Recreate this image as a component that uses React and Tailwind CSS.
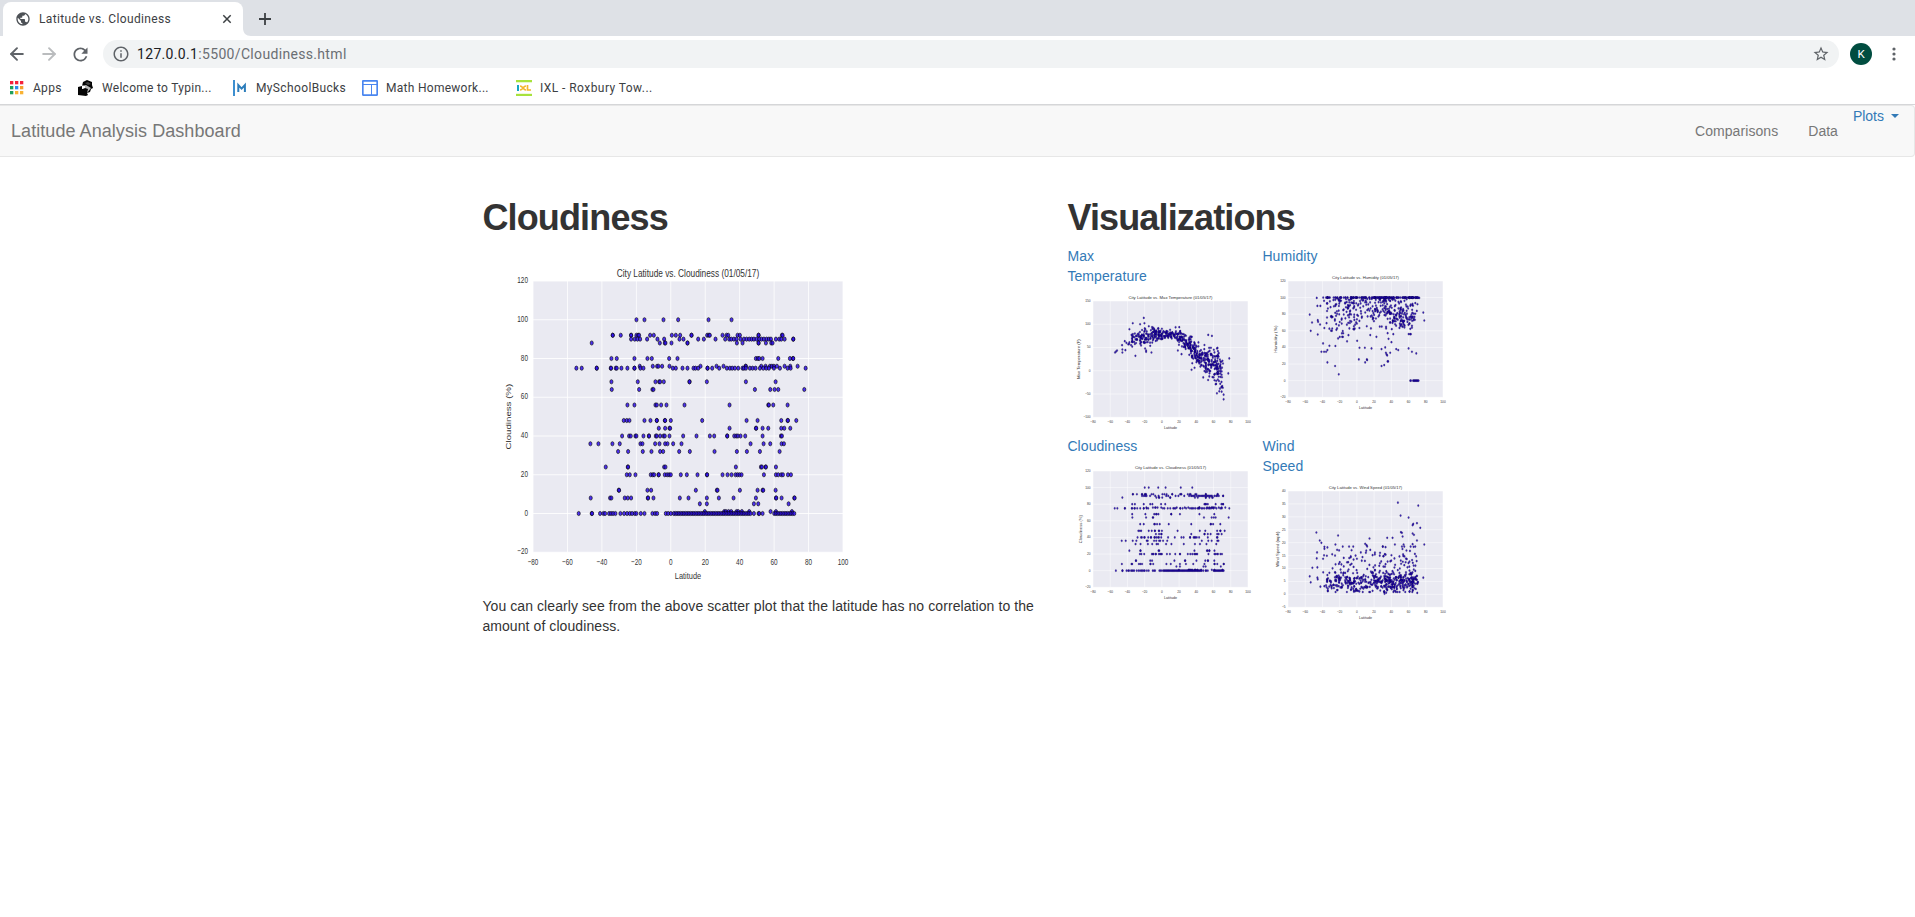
import React from "react";
import { ArrowLeft, ArrowRight } from "lucide-react";
import { MdRefresh, MdStarBorder, MdInfoOutline, MdPublic } from "react-icons/md";

/* Cloudiness readings: value -> positions along the latitude axis, 190..1119 spanning -80..100 */
const span = (a, b, step) => {
  const out = [];
  for (let x = a; x <= b; x += step) out.push(x);
  return out;
};
const CLOUD_ROWS = [
  [100, [500, 524, 581, 625, 716, 785]],
  [92, [429, 429, 453, 484, 484, 500, 505, 508, 541, 552, 606, 618, 631, 665, 665, 712, 717, 720, 758, 770, 775, 803, 810, 866, 866, 936, 938]],
  [90, [484, 495, 503, 511, 532, 563, 583, 629, 641, 685, 702, 737, 766, 778, 784, 792, 800, 812, 822, 830, 838, 845, 852, 860, 868, 875, 882, 890, 897, 903, 918, 928, 934, 944, 970, 970]],
  [88, [366, 570, 585, 587, 605, 653, 653, 801, 818, 866, 866, 888, 904, 908]],
  [80, [425, 441, 494, 533, 546, 598, 623, 858, 864, 868, 878, 925, 960, 969, 970]],
  [76, [510, 549, 562, 566, 577, 599, 692, 740, 761, 827, 828, 874, 887, 900, 906, 912, 921, 944, 961, 983]],
  [75, [320, 336, 381, 381, 423, 424, 438, 441, 455, 473, 494, 494, 512, 521, 609, 618, 638, 653, 671, 677, 685, 713, 713, 727, 748, 771, 780, 787, 795, 805, 818, 822, 828, 840, 848, 857, 870, 880, 889, 897, 912, 930, 953, 962, 1007]],
  [68, [425, 504, 557, 568, 571, 582, 659, 659, 711, 828, 917]],
  [64, [426, 508, 548, 551, 855, 901, 914, 925, 1003]],
  [56, [473, 494, 557, 561, 574, 590, 644, 779, 895, 897, 910, 953]],
  [48, [462, 471, 479, 524, 542, 561, 561, 585, 586, 603, 697, 830, 863, 934, 953, 954, 979]],
  [44, [567, 586, 599, 601, 779, 858, 859, 878, 895, 934, 943, 961]],
  [40, [457, 478, 483, 497, 500, 521, 537, 538, 558, 561, 571, 581, 585, 599, 640, 680, 720, 733, 772, 772, 793, 799, 804, 812, 826, 878, 933, 936]],
  [36, [362, 386, 428, 450, 512, 518, 556, 569, 586, 593, 610, 635, 842, 881, 901, 935, 942]],
  [32, [445, 475, 519, 545, 571, 580, 628, 660, 734, 801, 831, 870, 929]],
  [24, [408, 474, 475, 583, 587, 798, 873, 876, 887, 888, 918]],
  [20, [471, 480, 497, 543, 549, 553, 566, 567, 585, 592, 598, 603, 633, 651, 683, 711, 712, 758, 773, 785, 797, 803, 809, 815, 882, 918, 925, 934, 939, 954, 963]],
  [12, [447, 448, 533, 544, 678, 741, 743, 810, 863, 878, 880, 917]],
  [8, [363, 421, 425, 465, 474, 484, 534, 535, 551, 630, 656, 711, 747, 791, 858, 918, 919, 935, 973, 974]],
  [5, [690, 711, 852, 865, 956]],
  [1, [705, 763, 768, 776, 784, 800, 805, 816, 838, 902, 918, 966]],
  [0, [327, 366, 367, 391, 401, 406, 418, 424, 430, 437, 452, 463, 472, 480, 487, 495, 500, 513, 524, 548, 556, 562, 588, 595, 603, ...span(612, 846, 5), 852, 866, 868, 878, ...span(913, 974, 5)]],
];
const toLat = (x) => ((x - 190) / 929) * 180 - 80;
const cloudiness = CLOUD_ROWS.flatMap(([v, xs]) => xs.map((x) => [toLat(x), v]));

const makeRandom = (seed) => () => {
  seed = (seed * 1664525 + 1013904223) % 4294967296;
  return seed / 4294967296;
};
const rnd = makeRandom(20170105);
const gauss = () => (rnd() + rnd() + rnd() + rnd() - 2) * 1.73;
const lats = [
  ...cloudiness.map(([l]) => l).filter((l) => l > -40 && l < 71),
  ...span(0, 90, 1).map(() => 18 + rnd() * 50),
];

const CURVE = [[-60, 36, 4], [-45, 55, 6], [-33, 68, 8], [-20, 75, 9], [0, 79, 7], [18, 77, 7], [26, 66, 9], [36, 44, 13], [46, 28, 14], [54, 18, 17], [60, 9, 18], [66, 4, 22], [72, -4, 27]];
const curveAt = (lat) => {
  let i = 0;
  while (i < CURVE.length - 2 && lat > CURVE[i + 1][0]) i++;
  const [a, b] = [CURVE[i], CURVE[i + 1]];
  const t = (lat - a[0]) / (b[0] - a[0]);
  return [a[1] + (b[1] - a[1]) * t, a[2] + (b[2] - a[2]) * t];
};
/* positions measured on a 464x350 axes grid whose left edge is at x = 100 */
const fromGrid = (pts, top, max, range) =>
  pts.map(([x, y]) => [((x - 100) / 464) * 180 - 80, max - ((y - top) / 350) * range]);

const temperature = [
  ...lats.map((l) => {
    const [m, s] = curveAt(l);
    return [l, m + gauss() * s * 0.95];
  }),
  ...fromGrid([[252, 113], [219, 129], [241, 132], [254, 129], [209, 147], [267, 138], [445, 164], [456, 167], [453, 203], [508, 235], [505, 280], [491, 358], [491, 344], [227, 227], [166, 217], [169, 214], [172, 211], [187, 195], [188, 208], [188, 217], [197, 210], [195, 183], [200, 188], [256, 205], [259, 211], [259, 215], [275, 217], [354, 211], [365, 222], [395, 269], [404, 263], [430, 292], [474, 213], [471, 340], [485, 335], [487, 318], [480, 326], [478, 334], [484, 322]], 62, 150, 250),
];

const humidity = [
  ...lats.filter((l) => l < 64 || rnd() < 0.75).map((l) => {
    const r = rnd();
    if (r < 0.3) return [l, 100];
    if (l > 42) return [l, Math.max(56, Math.min(98, 78 + gauss() * 11))];
    if (l < -28) return [l, Math.max(60, Math.min(98, 80 + gauss() * 10))];
    return [l, Math.max(38, 99 - Math.abs(gauss()) * 21)];
  }),
  ...span(62, 72, 0.8).filter((l) => l < 63.5 || l > 65).map((l) => [l, 0]),
  ...fromGrid([[165, 163], [172, 187], [168, 212], [186, 113], [188, 137], [197, 137], [189, 180], [190, 185], [196, 193], [189, 223], [205, 250], [200, 275], [208, 275], [214, 275], [218, 270], [224, 257], [218, 307], [241, 318], [252, 343], [250, 235], [262, 230], [281, 225], [307, 242], [312, 298], [331, 307], [336, 298], [337, 300], [314, 263], [330, 263], [350, 265], [380, 318], [388, 315], [395, 283], [397, 286], [398, 304], [400, 304], [406, 278], [393, 278], [391, 262], [424, 267], [430, 270], [461, 265], [471, 275], [484, 280], [505, 157], [508, 181], [489, 113], [493, 113]], 62, 120, 140),
];

const wind = [
  ...lats.map((l) => {
    const low = rnd() < 0.64;
    return [l, low ? Math.max(0.9, 4.2 + gauss() * 1.8) : Math.min(18.5, 4.8 + Math.abs(gauss()) * 6.6)];
  }),
  ...fromGrid([[429, 217], [490, 226], [437, 256], [461, 262], [486, 279], [475, 281], [473, 285], [496, 293], [438, 306], [441, 308], [473, 310], [477, 314], [443, 319], [486, 331], [508, 343], [185, 307], [195, 331], [200, 338], [250, 316], [344, 325], [397, 323], [413, 323], [209, 350], [209, 356], [242, 343], [247, 359], [253, 361], [187, 367], [186, 385], [173, 413], [165, 439], [168, 457], [188, 412], [188, 443], [189, 448], [197, 470], [331, 341], [335, 345], [337, 349], [392, 351], [420, 343], [446, 343], [473, 342], [476, 350], [505, 443], [389, 491], [394, 488], [451, 486], [487, 489], [205, 386], [218, 352], [318, 367], [333, 368], [323, 381], [360, 373]], 182, 40, 45),
];

const LATITUDES = [-80, -60, -40, -20, 0, 20, 40, 60, 80, 100];
const tickText = (v) => String(v).replace("-", "−");
const tickWidth = (v) => tickText(v).length * 5.7;

function ScatterPlot({ title, titleWidth, label, labelWidth, labelX = 40, min, max, step, points, small = false, className }) {
  const px = (v) => 80 + ((v + 80) / 180) * 496;
  const py = (v) => 420 - ((v - min) / (max - min)) * 372;
  const ticks = span(min, max, step);
  return (
    <svg viewBox="0 0 640 480" preserveAspectRatio="none" className={className} fontFamily="'Liberation Sans', Arial, sans-serif" fill="#333333">
      <rect x="80" y="48" width="496" height="372" fill="#eaeaf2" />
      <g stroke="#ffffff" strokeWidth={small ? 1.8 : 1.4} strokeOpacity="0.85">
        {LATITUDES.map((v) => <line key={v} x1={px(v)} x2={px(v)} y1="48" y2="420" />)}
        {ticks.map((v) => <line key={v} x1="80" x2="576" y1={py(v)} y2={py(v)} />)}
      </g>
      <g fill={small ? "#1c00b4" : "#2f0ff0"} fillOpacity="0.85" stroke="#000000" strokeWidth={small ? 0.8 : 1.1} strokeOpacity={small ? 0.6 : 0.8}>
        {points.map(([lat, v], i) => <ellipse key={i} cx={px(lat)} cy={py(v)} rx={small ? 2.8 : 2.5} ry={small ? 3.5 : 2.9} />)}
      </g>
      <text x="328" y="42" fontSize="14" textAnchor="middle" textLength={titleWidth} lengthAdjust="spacingAndGlyphs">{title}</text>
      <text x="328" y="457" fontSize="13.5" textAnchor="middle" textLength="42" lengthAdjust="spacingAndGlyphs">Latitude</text>
      <text transform={`translate(${labelX + 4} 234) rotate(-90)`} fontSize="12" textAnchor="middle" textLength={labelWidth} lengthAdjust="spacingAndGlyphs">{label}</text>
      <g fontSize="12.5">
        {LATITUDES.map((v) => <text key={v} x={px(v)} y="438" textAnchor="middle" textLength={tickWidth(v)} lengthAdjust="spacingAndGlyphs">{tickText(v)}</text>)}
        {ticks.map((v) => <text key={v} x="72" y={py(v) + 3} textAnchor="end" textLength={tickWidth(v)} lengthAdjust="spacingAndGlyphs">{tickText(v)}</text>)}
      </g>
    </svg>
  );
}

const CLOUD = { title: "City Latitude vs. Cloudiness (01/05/17)", titleWidth: 228, label: "Cloudiness (%)", labelWidth: 90, min: -20, max: 120, step: 20, points: cloudiness };
const THUMBS = [
  { name: ["Max", "Temperature"], plot: { title: "City Latitude vs. Max Temperature (01/05/17)", titleWidth: 269, label: "Max Temperature (F)", labelWidth: 127, labelX: 34, min: -100, max: 150, step: 50, points: temperature } },
  { name: ["Humidity"], plot: { title: "City Latitude vs. Humidity (01/05/17)", titleWidth: 214, label: "Humidity (%)", labelWidth: 87, min: -20, max: 120, step: 20, points: humidity } },
  { name: ["Cloudiness"], plot: CLOUD },
  { name: ["Wind", "Speed"], plot: { title: "City Latitude vs. Wind Speed (01/05/17)", titleWidth: 235, label: "Wind Speed (mph)", labelWidth: 112, labelX: 47, min: -5, max: 40, step: 5, points: wind } },
];

function AppsIcon() {
  const colors = ["#f5223c", "#f5223c", "#f5223c", "#1fa05a", "#2f8af0", "#f5a02c", "#1fa05a", "#f9b233", "#f9b233"];
  return (
    <svg width="14" height="14" viewBox="0 0 14 14" className="shrink-0">
      {colors.map((c, i) => <rect key={i} x={(i % 3) * 5} y={Math.floor(i / 3) * 5} width="3.3" height="3.3" fill={c} />)}
    </svg>
  );
}

function TypingIcon() {
  return (
    <svg width="17" height="17" viewBox="0 0 17 17" className="shrink-0">
      <path d="M1 7l4-1 1-4 4-2 5 2v3l1 3-2 1-1 3-3 1 1 2-2 1-8-1z" fill="#050505" />
      <path d="M5 6l4-1 5 3-4 5 1-4-3-1-3 1z" fill="#b9b9b9" />
      <path d="M5 5.5l3 .5v2L5 9z" fill="#ffffff" />
      <path d="M8 3l3-1 3 2-3 1z" fill="#444444" />
    </svg>
  );
}

function BucksIcon() {
  return (
    <svg width="13" height="16" viewBox="0 0 13 16" className="shrink-0">
      <rect x="0" y="0" width="2" height="16" fill="#3d8fd0" />
      <path d="M5.3 12V5l3.3 3.6L11.9 5v7" fill="none" stroke="#2c7dbb" strokeWidth="2" />
    </svg>
  );
}

function HomeworkIcon() {
  return (
    <svg width="16" height="16" viewBox="0 0 16 16" className="shrink-0">
      <rect x="0.8" y="0.8" width="14.4" height="14.4" rx="0.6" fill="#fff" stroke="#4a86f0" strokeWidth="1.7" />
      <path d="M1 4.5h14M9.5 4.5V15" stroke="#4a86f0" strokeWidth="1" />
    </svg>
  );
}

function IxlIcon() {
  return (
    <svg width="16" height="16" viewBox="0 0 16 16" className="shrink-0">
      <rect width="16" height="2" fill="#a8e23c" />
      <rect y="2" width="16" height="1" fill="#e6f7cc" />
      <rect y="14" width="16" height="2" fill="#a8e23c" />
      <rect y="13" width="16" height="1" fill="#eefadc" />
      <rect x="1" y="5" width="2" height="6" fill="#12a5c4" />
      <path d="M4 6c3 0 3 4 6 4M4 10c3 0 3-4 6-4M11.5 5v5h3.5" fill="none" stroke="#f4b62c" strokeWidth="1.7" />
    </svg>
  );
}

function Bookmark({ icon, children, className }) {
  return (
    <a className={`flex items-center whitespace-nowrap ${className}`}>
      {icon}
      {children}
    </a>
  );
}

function BrowserChrome() {
  return (
    <header className="font-['Roboto',sans-serif] text-[#3c4043]">
      <div className="flex h-9 items-end bg-[#dee1e6]">
        <div className="ml-[3px] flex h-[34px] w-60 items-center rounded-t-lg bg-white pl-[12px] pr-[11px] pb-px text-xs tracking-[0.36px]">
          <MdPublic className="mr-[8px] size-4 text-[#4d5156]" />
          <span className="grow">Latitude vs. Cloudiness</span>
          <svg width="10" height="10" viewBox="0 0 10 10"><path d="M1.3 1.3l7.4 7.4M8.7 1.3L1.3 8.7" stroke="#3c4043" strokeWidth="1.5" /></svg>
        </div>
        <svg width="8" height="8" viewBox="0 0 8 8"><path d="M0 0C0 5 3 8 8 8H0z" fill="#fff" /></svg>
        <svg width="12" height="12" viewBox="0 0 12 12" className="mb-[11px] ml-2"><path d="M6 0v12M0 6h12" stroke="#3c4043" strokeWidth="1.8" /></svg>
      </div>
      <div className="flex h-9 items-center bg-white">
        <ArrowLeft className="ml-[7px] size-5 text-[#5f6368]" strokeWidth={2.3} />
        <ArrowRight className="ml-3 size-5 text-[#babcbe]" strokeWidth={2.3} />
        <MdRefresh className="ml-[11px] size-[21px] text-[#5f6368]" />
        <div className="ml-[12px] flex h-7 w-[1736px] items-center rounded-full bg-[#f1f3f4] pl-[9px] pr-[9px] text-sm tracking-[0.33px]">
          <MdInfoOutline className="mr-[7px] size-[18px] text-[#5f6368]" />
          <span className="grow text-[#6a6e73]"><span className="text-[#202124]">127.0.0.1</span>:5500/Cloudiness.html</span>
          <MdStarBorder className="size-[18px] text-[#5f6368]" />
        </div>
        <div className="ml-[11px] flex size-[22px] items-center justify-center rounded-full bg-[#004d40] text-[11.5px] text-white">K</div>
        <svg width="4" height="14" viewBox="0 0 4 14" className="ml-5" fill="#5f6368"><circle cx="2" cy="2" r="1.6" /><circle cx="2" cy="7" r="1.6" /><circle cx="2" cy="12" r="1.6" /></svg>
      </div>
      <nav className="flex h-[33px] items-center border-b border-[#d5d6d8] bg-white pl-2.5 text-xs tracking-[0.28px]">
        <Bookmark className="w-[67px] gap-[9px]" icon={<AppsIcon />}>Apps</Bookmark>
        <Bookmark className="w-[156px] gap-2" icon={<TypingIcon />}>Welcome to Typin...</Bookmark>
        <Bookmark className="w-[129px] gap-[10px] tracking-[0.36px]" icon={<BucksIcon />}>MySchoolBucks</Bookmark>
        <Bookmark className="w-[154px] gap-2" icon={<HomeworkIcon />}>Math Homework...</Bookmark>
        <Bookmark className="gap-2 tracking-[0.44px]" icon={<IxlIcon />}>IXL - Roxbury Tow...</Bookmark>
      </nav>
    </header>
  );
}

export default function App() {
  return (
    <div className="h-[917px] overflow-hidden bg-white font-['Liberation_Sans',Arial,sans-serif] text-sm leading-5 text-[#333]">
      <BrowserChrome />
      <nav className="flex h-[52px] items-start rounded-r border border-l-0 border-[#e7e7e7] bg-[#f8f8f8] pl-[11px] pr-[15px] text-[#777]">
        <a className="mt-[15px] grow text-lg leading-5 tracking-[0.06px]">Latitude Analysis Dashboard</a>
        <a className="mt-[15px] tracking-[0.08px]">Comparisons</a>
        <a className="ml-[30px] mt-[15px]">Data</a>
        <a className="ml-[15px] flex items-center gap-[7px] text-[#337ab7]">
          Plots
          <svg width="8" height="4" viewBox="0 0 8 4"><path d="M0 0h8L4 4z" fill="#337ab7" /></svg>
        </a>
      </nav>
      <main className="flex gap-[30px] pl-[482.4px] pt-[41px]">
        <section className="w-[555px]">
          <h1 className="mb-2 h-10 text-4xl font-bold leading-10 tracking-[-0.85px]">Cloudiness</h1>
          <ScatterPlot {...CLOUD} className="ml-[0.6px] h-[350px] w-[400px]" />
          <p className="tracking-[0.08px]">You can clearly see from the above scatter plot that the latitude has no correlation to the amount of cloudiness.</p>
        </section>
        <section className="w-[390px]">
          <h1 className="mb-2 h-10 text-4xl font-bold leading-10 tracking-[-0.85px]">Visualizations</h1>
          <div className="grid grid-cols-2">
            {THUMBS.map(({ name, plot }) => (
              <a key={name[0]} className="tracking-[0.08px] text-[#337ab7]">
                {name.map((line) => <span key={line} className="block">{line}</span>)}
                <ScatterPlot {...plot} small className="ml-[0.6px] h-[150px] w-[200px] max-w-none tracking-normal" />
              </a>
            ))}
          </div>
        </section>
      </main>
    </div>
  );
}
